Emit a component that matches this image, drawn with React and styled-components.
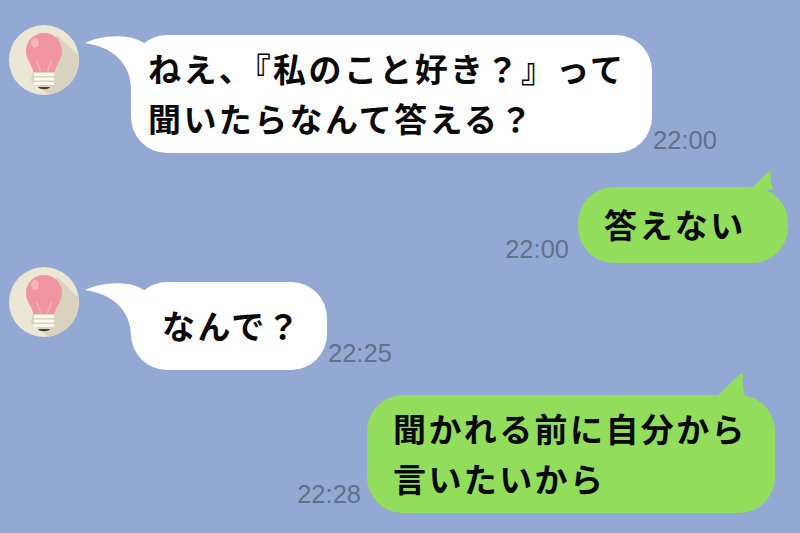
import styled, { createGlobalStyle } from 'styled-components';

const GlobalStyle = createGlobalStyle`
  html, body {
    margin: 0;
    padding: 0;
    background: #93a9d4;
  }
`;

const Chat = styled.main`
  width: 800px;
  height: 533px;
  overflow: hidden;
  box-sizing: border-box;
  background: #93a9d4;
  display: flex;
  flex-direction: column;
  font-family: 'Noto Sans CJK JP', 'Noto Sans', sans-serif;
`;

const Row = styled.section`
  display: flex;
  align-items: flex-end;
  justify-content: ${(props) => (props.$mine ? 'flex-end' : 'flex-start')};
  margin-top: ${(props) => props.$top}px;
  padding-right: ${(props) => props.$right || 0}px;
`;

const Avatar = styled.svg`
  width: 70px;
  height: 70px;
  flex-shrink: 0;
  align-self: flex-start;
  margin: ${(props) => props.$top}px 52px 0 9px;
`;

const Bubble = styled.div`
  position: relative;
  width: ${(props) => props.$width}px;
  height: ${(props) => props.$height}px;
  box-sizing: border-box;
  display: flex;
  flex-direction: column;
  justify-content: center;
  padding-left: ${(props) => props.$pad}px;
  padding-bottom: 2px;
  border-radius: 36px;
  background: ${(props) => (props.$mine ? '#93dd5c' : '#ffffff')};
  color: #0a0a0a;
  font-size: 33px;
  font-weight: 700;
  line-height: 50px;
  letter-spacing: 2.4px;
  white-space: nowrap;
`;

const Tail = styled.svg`
  position: absolute;
  overflow: visible;
  top: ${(props) => props.$top}px;
  left: ${(props) => props.$left}px;
  width: ${(props) => props.$w}px;
  height: ${(props) => props.$h}px;
`;

const Time = styled.time`
  font-family: 'Liberation Sans', Arial, sans-serif;
  font-size: 25.5px;
  line-height: 30px;
  color: #62708c;
  margin-bottom: ${(props) => props.$bottom}px;
  margin-left: ${(props) => props.$left || 0}px;
  margin-right: ${(props) => props.$right || 0}px;
`;

function BulbAvatar({ top }) {
  return (
    <Avatar $top={top} viewBox="0 0 70 70" aria-hidden>
      <circle cx="35" cy="35" r="35" fill="#ece6d5" />
      <path d="M48 10 L69 30 A35 35 0 0 1 40 69.6 L22 56 L24 46 Z" fill="#d8d2bf" />
      <path
        d="M35 8 C24.500 8 17 16 17 26 C17 34 22 38 24.500 47 L45.500 47 C48 38 53 34 53 26 C53 16 45.500 8 35 8 Z"
        fill="#f0949f"
      />
      <ellipse cx="26" cy="18" rx="4" ry="5" fill="#f5b3ba" />
      <path
        d="M27.500 35 L31.500 46 M42.500 35 L38.500 46"
        fill="none"
        stroke="#f6b5bc"
        strokeWidth="1.200"
      />
      <path d="M25 48 H45 V51 H25 Z M25 52.500 H45 V55.500 H25 Z M25 57 H45 V60 H25 Z" fill="#fbf8ee" />
      <path d="M29 62 H41 C40 65 30 65 29 62 Z" fill="#4c3d33" />
    </Avatar>
  );
}

function LeftTail() {
  return (
    <Tail $top={0} $left={-47} $w={60} $h={54} viewBox="0 0 60 54" aria-hidden>
      <path
        d="M1 8 C14 1 44 -3 60 8 L60 54 L47 54 C47 30 30 12 1 8 Z"
        fill="#ffffff"
      />
    </Tail>
  );
}

/* right-hand tail, scaled per bubble: the lower bubble has a much bigger one */
function RightTail({ left, top, size }) {
  return (
    <Tail $top={top} $left={left} $w={size} $h={size} viewBox="0 0 32 32" aria-hidden>
      <path d="M0 33 C8 25 18 15 27 7 C29 5.500 30.500 6.500 30 9 C29 15 30 26 34 33 Z" fill="#93dd5c" />
    </Tail>
  );
}

export default function App() {
  return (
    <Chat>
      <GlobalStyle />
      <Row $top={35}>
        <BulbAvatar top={-10} />
        <Bubble $width={521} $height={118} $pad={17}>
          <LeftTail />
          <span>ねえ、『私のこと好き？』って</span>
          <span>聞いたらなんて答える？</span>
        </Bubble>
        <Time $left={1} $bottom={-2}>22:00</Time>
      </Row>

      <Row $mine $top={34} $right={12}>
        <Time $right={9} $bottom={-1}>22:00</Time>
        <Bubble $mine $width={210} $height={76} $pad={26}>
          <RightTail left={172} top={-20} size={22} />
          <span>答えない</span>
        </Bubble>
      </Row>

      <Row $top={19}>
        <BulbAvatar top={-15} />
        <Bubble $width={196} $height={88} $pad={31}>
          <LeftTail />
          <span>なんで？</span>
        </Bubble>
        <Time $left={1} $bottom={2}>22:25</Time>
      </Row>

      <Row $mine $top={25} $right={25}>
        <Time $right={6} $bottom={4}>22:28</Time>
        <Bubble $mine $width={408} $height={118} $pad={26}>
          <RightTail left={346} top={-28} size={32} />
          <span>聞かれる前に自分から</span>
          <span>言いたいから</span>
        </Bubble>
      </Row>
    </Chat>
  );
}
